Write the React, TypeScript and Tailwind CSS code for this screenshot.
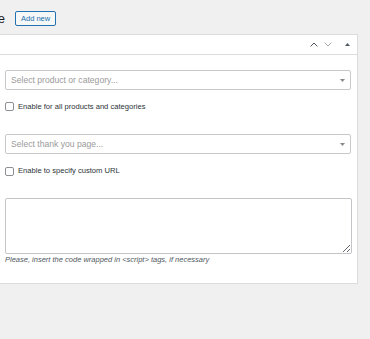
import React from "react";

const font = { fontFamily: '"Liberation Sans", Arial, sans-serif' };

function SelectBox({ placeholder }: { placeholder: string }) {
  return (
    <div className="flex h-[20px] w-[346px] items-center justify-between rounded-[2px] border border-[#c9c9c9] bg-white pl-[5px] pr-[4px]">
      <span className="text-[8.6px] text-[#9a9a9a]">{placeholder}</span>
      <svg width="5" height="3" viewBox="0 0 5 3" className="mr-[1px]">
        <path d="M0 0h5L2.5 3z" fill="#888" />
      </svg>
    </div>
  );
}

function CheckRow({ label }: { label: string }) {
  return (
    <label className="flex items-center gap-[4px]">
      <span className="h-[9px] w-[9px] rounded-[2px] border border-[#8c8f94] bg-white" />
      <span className="text-[7.6px] text-[#2c3338]">{label}</span>
    </label>
  );
}

export default function App() {
  return (
    <div className="h-[339px] w-[370px] overflow-hidden bg-[#f0f0f1]" style={font}>
      <div className="flex h-[34px] items-center gap-[10px] pt-[3px]">
        <div className="flex w-[5px] justify-end overflow-hidden">
          <h1 className="shrink-0 whitespace-nowrap text-[13px] font-normal text-[#1d2327]">Thank You Page</h1>
        </div>
        <button className="h-[15px] rounded-[2px] border border-[#2271b1] bg-[#f6f7f7] px-[5px] text-[7.5px] font-medium leading-none text-[#2271b1]">
          Add new
        </button>
      </div>

      <div className="-ml-px w-[359px] border border-[#dcdcde] bg-white">
        <div className="flex h-[20px] items-center justify-end gap-[6px] border-b border-[#dcdcde] pr-[7px]">
          <svg width="8" height="5" viewBox="0 0 8 5">
            <path d="M0.6 4.4L4 1l3.4 3.4" fill="none" stroke="#50575e" strokeWidth="1" />
          </svg>
          <svg width="8" height="5" viewBox="0 0 8 5" className="mr-[7px]">
            <path d="M0.6 0.6L4 4l3.4-3.4" fill="none" stroke="#a7aaad" strokeWidth="1" />
          </svg>
          <svg width="5" height="3" viewBox="0 0 5 3">
            <path d="M2.5 0L5 3H0z" fill="#50575e" />
          </svg>
        </div>

        <div className="pb-[18px] pl-[5px] pt-[15px]">
          <SelectBox placeholder="Select product or category..." />
          <div className="mt-[11px]">
            <CheckRow label="Enable for all products and categories" />
          </div>

          <div className="mt-[22px]">
            <SelectBox placeholder="Select thank you page..." />
          </div>
          <div className="mt-[11px]">
            <CheckRow label="Enable to specify custom URL" />
          </div>

          <textarea className="mt-[21px] block h-[56px] w-[347px] rounded-[2px] border border-[#c3c4c7] bg-white outline-none" />
          <p className="text-[7.5px] italic text-[#50575e]">
            Please, insert the code wrapped in &lt;script&gt; tags, if necessary
          </p>
        </div>
      </div>
    </div>
  );
}
